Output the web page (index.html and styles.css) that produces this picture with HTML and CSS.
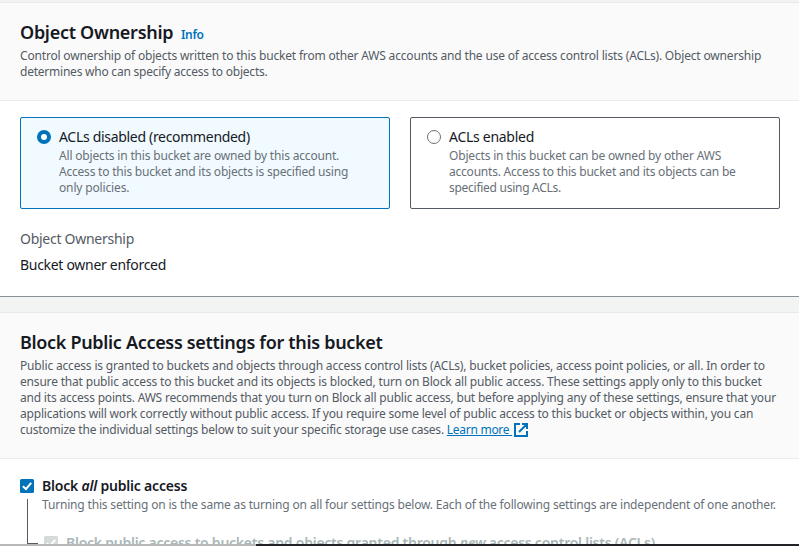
FILE: index.html
```
<!DOCTYPE html>
<html lang="en">
<head>
<meta charset="utf-8">
<title>Create bucket</title>
<link rel="stylesheet" href="styles.css">
</head>
<body>
<main class="page">
  <section class="panel ownership">
    <header class="panel-header">
      <h2><span class="t1">Object Ownership</span> <a class="info">Info</a></h2>
      <p class="desc">
        <span class="line a1">Control ownership of objects written to this bucket from other AWS accounts and the use of access control lists (ACLs). Object ownership</span>
        <span class="line a2">determines who can specify access to objects.</span>
      </p>
    </header>
    <div class="panel-body">
      <div class="tiles">
        <label class="tile selected">
          <span class="radio"></span>
          <span class="tile-text">
            <span class="tile-title b0">ACLs disabled (recommended)</span>
            <span class="line b1">All objects in this bucket are owned by this account.</span>
            <span class="line b2">Access to this bucket and its objects is specified using</span>
            <span class="line b3">only policies.</span>
          </span>
        </label>
        <label class="tile">
          <span class="radio"></span>
          <span class="tile-text">
            <span class="tile-title c0">ACLs enabled</span>
            <span class="line c1">Objects in this bucket can be owned by other AWS</span>
            <span class="line c2">accounts. Access to this bucket and its objects can be</span>
            <span class="line c3">specified using ACLs.</span>
          </span>
        </label>
      </div>
      <div class="field-label"><span class="d1">Object Ownership</span></div>
      <div class="field-value"><span class="d2">Bucket owner enforced</span></div>
    </div>
  </section>
  <section class="panel">
    <header class="panel-header block-header">
      <h2><span class="t2">Block Public Access settings for this bucket</span></h2>
      <p class="desc">
        <span class="line e1">Public access is granted to buckets and objects through access control lists (ACLs), bucket policies, access point policies, or all. In order to</span>
        <span class="line e2">ensure that public access to this bucket and its objects is blocked, turn on Block all public access. These settings apply only to this bucket</span>
        <span class="line e3">and its access points. AWS recommends that you turn on Block all public access, but before applying any of these settings, ensure that your</span>
        <span class="line e4">applications will work correctly without public access. If you require some level of public access to this bucket or objects within, you can</span>
        <span class="line e5">customize the individual settings below to suit your specific storage use cases. <a class="link">Learn more <svg class="ext" viewBox="0 0 14 14"><path d="M6 1H1v12h12V8M8 1h5v5M13 1L5 9"/></svg></a></span>
      </p>
    </header>
    <div class="checks">
      <div class="check-row">
        <svg class="box" viewBox="0 0 14 14"><rect width="14" height="14" rx="1.5"/><path d="M2.8 7.2L6 10l5.2-6.2"/></svg>
        <div>
          <div class="check-title"><span class="f0">Block <em>all</em> public access</span></div>
          <span class="line f1">Turning this setting on is the same as turning on all four settings below. Each of the following settings are independent of one another.</span>
        </div>
      </div>
      <div class="check-row child">
        <svg class="box" viewBox="0 0 14 14"><rect width="14" height="14" rx="1.5"/><path d="M2.8 7.2L6 10l5.2-6.2"/></svg>
        <div class="check-title"><span class="g0">Block public access to buckets and objects granted through <em>new</em> access control lists (ACLs)</span></div>
      </div>
    </div>
  </section>
  <div class="bottom-edge"></div>
</main>
</body>
</html>
```

FILE: styles.css
```
* { box-sizing: border-box; }
body { margin: 0; background: #f2f3f3; color: #16191f; font-family: "Noto Sans", "Open Sans", sans-serif; font-size: 14px; }
.page { position: relative; width: 799px; height: 546px; overflow: hidden; padding-top: 2px; }
.panel { background: #fff; border-top: 1px solid #e6eaea; }
.ownership { height: 295px; border-bottom: 1px solid #879196; margin-bottom: 15px; }
.panel-header { height: 98px; padding: 18px 20px 0; background: #fafafa; border-bottom: 1px solid #eaeded; }
.block-header { height: 146px; }
h2 { margin: 0; font-size: 18px; line-height: 22px; height: 27px; font-weight: 600; white-space: nowrap; }
.info { margin-left: 3px; font-size: 12px; color: #0073bb; letter-spacing: -0.3px; }
.desc { margin: 0; color: #545b64; }
.line { display: block; width: max-content; font-size: 12px; line-height: 16px; white-space: nowrap; }
.panel-body { padding: 16px 20px 0; }
.tiles { display: grid; grid-template-columns: 370px 370px; gap: 20px; }
.tile { display: flex; height: 92px; padding: 9px 16px; border: 1px solid #545b64; border-radius: 2px; }
.tile.selected { border-color: #0073bb; background: #f1faff; }
.radio { width: 14px; height: 14px; margin: 3px 8px 0 0; border: 1px solid #687078; border-radius: 50%; background: #fff; }
.selected .radio { border: 4.5px solid #0073bb; }
.tile-text { color: #687078; }
.tile-title { display: block; width: max-content; color: #16191f; line-height: 20px; height: 21px; white-space: nowrap; }
.field-label { margin-top: 19px; line-height: 22px; color: #545b64; }
.field-value { margin-top: 4px; line-height: 22px; }
.link { color: #0073bb; text-decoration: underline; letter-spacing: -0.28px; }
.ext { width: 14px; height: 14px; margin-left: 2px; vertical-align: -3px; fill: none; stroke: #0073bb; stroke-width: 2; }
.checks { padding: 17px 20px 0; color: #687078; }
.check-row { display: flex; gap: 8px; }
.box { flex: none; width: 14px; height: 14px; margin-top: 3px; fill: #0073bb; }
.box path { fill: none; stroke: #fff; stroke-width: 2; }
.check-title { height: 21px; line-height: 20px; font-weight: 600; color: #16191f; white-space: nowrap; }
.child { position: relative; margin-top: 20px; padding-left: 24px; }
.child::before { content: ""; position: absolute; left: 7px; top: -34px; width: 10px; height: 44px; border-left: 1px solid #545b64; border-bottom: 1px solid #545b64; }
.child .box { fill: #d5dbdb; }
.child .check-title { color: #aab7b8; }
.bottom-edge { position: absolute; left: 0; right: 0; bottom: 0; height: 2px; background: linear-gradient(to right, #b8b8b8 256px, #232427 256px); }

/* Per-line tracking */
.t1 { letter-spacing: -0.28px; }
.t2 { letter-spacing: -0.32px; }
.a1 { letter-spacing: -0.178px; }
.a2 { letter-spacing: -0.23px; }
.b0 { letter-spacing: -0.31px; }
.b1 { letter-spacing: -0.175px; }
.b2 { letter-spacing: -0.21px; }
.b3 { letter-spacing: -0.15px; }
.c0 { letter-spacing: -0.28px; }
.c1 { letter-spacing: -0.18px; }
.c2 { letter-spacing: -0.22px; }
.c3 { letter-spacing: -0.27px; }
.d1 { letter-spacing: -0.27px; }
.d2 { letter-spacing: -0.3px; }
.e1 { letter-spacing: -0.17px; }
.e2 { letter-spacing: -0.183px; }
.e3 { letter-spacing: -0.195px; }
.e4 { letter-spacing: -0.187px; }
.e5 { letter-spacing: -0.2px; }
.f0 { letter-spacing: -0.2px; }
.f1 { letter-spacing: -0.172px; }
.g0 { letter-spacing: -0.25px; }
```
